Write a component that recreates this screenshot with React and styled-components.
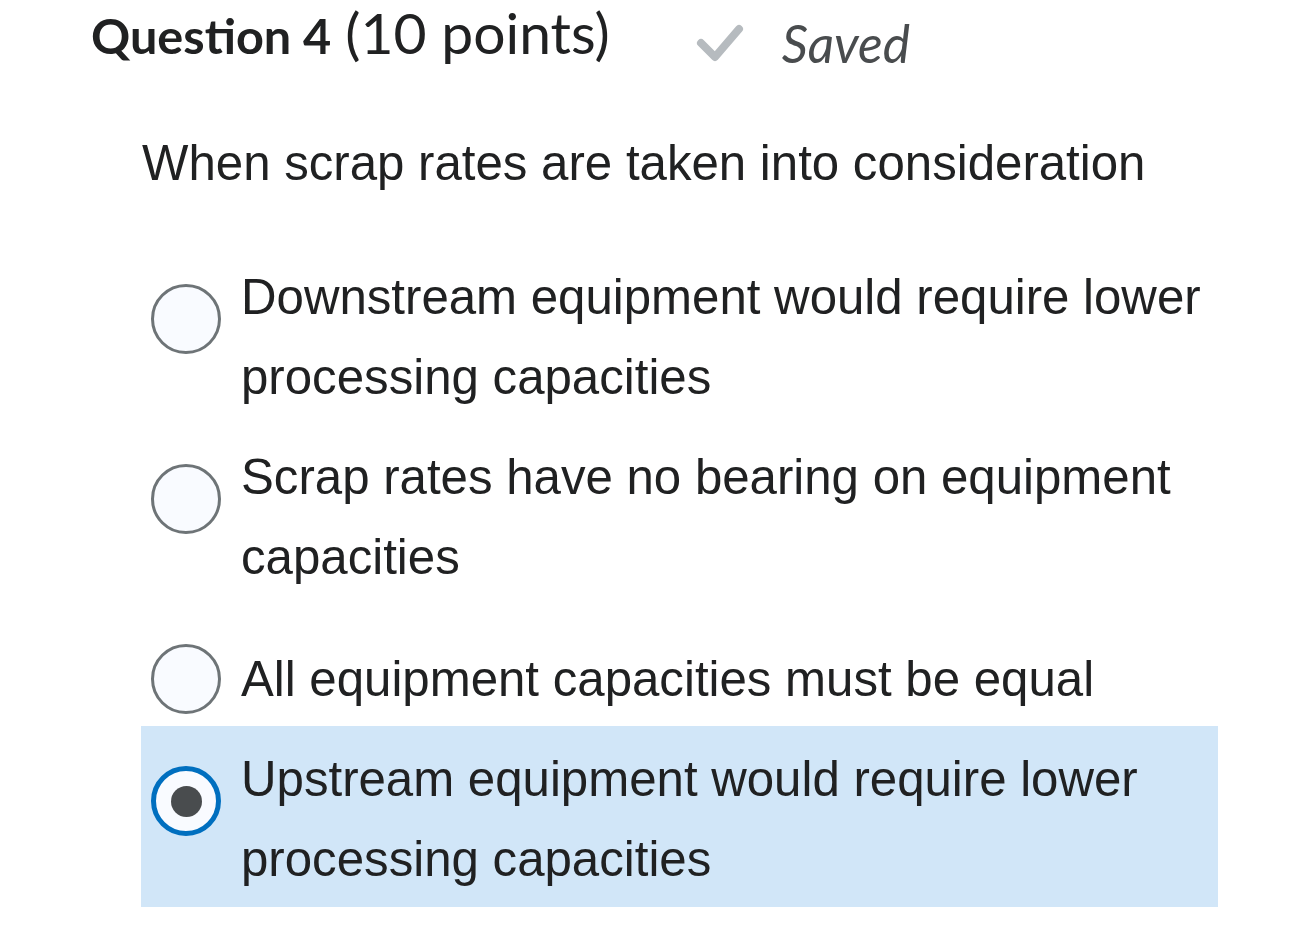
import React from 'react';
import styled, { createGlobalStyle } from 'styled-components';

const GlobalStyle = createGlobalStyle`
  html, body {
    margin: 0;
    padding: 0;
    background: #ffffff;
  }
  body {
    font-family: "Liberation Sans", Arial, sans-serif;
    color: #202122;
  }
`;

const Page = styled.div`
  width: 1290px;
  height: 938px;
  overflow: hidden;
  background: #ffffff;
`;

const Header = styled.div`
  display: flex;
  align-items: baseline;
  padding: 0 0 0 91px;
  height: 80px;
  box-sizing: border-box;
`;

const Title = styled.h2`
  margin: 0;
  font-family: Lato, "Noto Sans", sans-serif;
  color: #202122;
  line-height: 64px;
  white-space: nowrap;

  .label {
    font-weight: 700;
    font-size: 48.6px;
  }
  .points {
    font-weight: 400;
    font-size: 57px;
    margin-left: 14px;
  }
`;

const SavedState = styled.div`
  display: flex;
  align-items: baseline;
  margin-left: 86px;
  transform: translateY(9px);

  svg {
    width: 48px;
    height: 40px;
    margin-right: 38px;
    align-self: center;
  }

  span {
    font-family: Lato, "Noto Sans", sans-serif;
    font-style: italic;
    font-size: 51.5px;
    color: #494c4e;
  }
`;

const Prompt = styled.p`
  margin: 43px 0 0 142px;
  font-size: 49.2px;
  line-height: 80px;
  color: #202122;
`;

const Options = styled.div`
  margin: 41px 0 0 141px;
  width: 1077px;
  display: flex;
  flex-direction: column;
`;

const Option = styled.label`
  display: flex;
  align-items: ${p => (p.$single ? 'center' : 'flex-start')};
  padding: ${p => (p.$single ? '35px' : '13px')} 0 ${p => (p.$checked ? '8px' : '7px')} 10px;
  background: ${p => (p.$checked ? '#d1e6f8' : 'transparent')};
  cursor: pointer;
`;

const Radio = styled.span`
  flex-shrink: 0;
  width: 70px;
  height: 70px;
  box-sizing: border-box;
  border-radius: 50%;
  background: #f9fbff;
  border: ${p => (p.$checked ? '5px solid #006fbf' : '3px solid #6e7477')};
  margin-top: ${p => (p.$single ? '0' : '27px')};
  display: flex;
  align-items: center;
  justify-content: center;

  &::after {
    content: '';
    display: ${p => (p.$checked ? 'block' : 'none')};
    width: 31px;
    height: 31px;
    border-radius: 50%;
    background: #494c4e;
  }
`;

const OptionText = styled.span`
  margin-left: 20px;
  font-size: 49.2px;
  line-height: 80px;
  color: #202122;
`;

const choices = [
  { text: 'Downstream equipment would require lower processing capacities' },
  { text: 'Scrap rates have no bearing on equipment capacities' },
  { text: 'All equipment capacities must be equal', single: true },
  { text: 'Upstream equipment would require lower processing capacities', checked: true },
];

const CheckIcon = () => (
  <svg viewBox="0 0 48 40" fill="none">
    <path d="M5 20 L19 34 L43 6" stroke="#b6bbbf" strokeWidth="8" strokeLinecap="round" strokeLinejoin="round" />
  </svg>
);

export default function App() {
  return (
    <Page>
      <GlobalStyle />
      <Header>
        <Title>
          <span className="label">Question 4</span>
          <span className="points">(10 points)</span>
        </Title>
        <SavedState>
          <CheckIcon />
          <span>Saved</span>
        </SavedState>
      </Header>
      <Prompt>When scrap rates are taken into consideration</Prompt>
      <Options>
        {choices.map(c => (
          <Option key={c.text} $checked={c.checked} $single={c.single}>
            <Radio $checked={c.checked} $single={c.single} />
            <OptionText>{c.text}</OptionText>
          </Option>
        ))}
      </Options>
    </Page>
  );
}
